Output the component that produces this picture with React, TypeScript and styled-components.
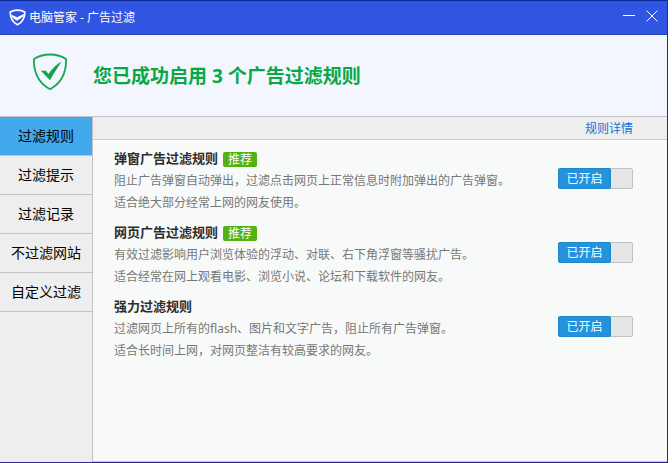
import React, { useState } from "react";
import styled, { createGlobalStyle } from "styled-components";

const GlobalStyle = createGlobalStyle`
  *, *::before, *::after { box-sizing: border-box; }
  body {
    margin: 0;
    background: #fff;
    font-family: "Noto Sans", "Noto Sans CJK SC", sans-serif;
    font-size: 12px;
  }
  button { font-family: inherit; border: 0; padding: 0; background: none; cursor: pointer; }
`;

const Window = styled.div`
  display: flex;
  flex-direction: column;
  min-height: 100vh;
  margin-right: 4px;
  border: 1px solid #36248c;
  border-left: 0;
  border-top-color: #0c2a94;
`;

const TitleBar = styled.header`
  display: flex;
  align-items: center;
  height: 34px;
  padding: 0 8px 0 9px;
  background: #2f55e2;
  border-bottom: 1px solid #2743b4;
  color: #fff;
`;

const WindowTitle = styled.span`
  flex: 1;
  margin-left: 3px;
  line-height: 18px;
`;

const WindowControls = styled.div`
  display: flex;
  gap: 9px;
  padding-bottom: 3px;
`;

const WindowButton = styled.button`
  display: flex;
  width: 14px;
  height: 14px;
  color: #fff;
`;

const Banner = styled.section`
  display: flex;
  align-items: center;
  gap: 25px;
  height: 81px;
  padding: 0 32px;
  background: #f3f6fe;

  svg { margin-bottom: 8px; }
`;

const BannerTitle = styled.h1`
  margin: 0;
  color: #08a845;
  font-size: 19px;
  line-height: 28px;
`;

const Body = styled.div`
  display: flex;
  flex: 1;
  border-top: 1px solid #c3c5c9;
`;

const Sidebar = styled.nav`
  width: 93px;
  flex-shrink: 0;
  background: #eee;
  border-right: 1px solid #bfc0c1;
`;

const NavItem = styled.button<{ $active: boolean }>`
  display: block;
  width: 100%;
  height: 39px;
  border-bottom: 1px solid #c2c2c2;
  background: ${({ $active }) => ($active ? "#41a9ec" : "#eee")};
  color: #000;
  font-size: 14px;
  line-height: 38px;
`;

const Content = styled.main`
  flex: 1;
  background: #f8fafa;
  border-bottom: 1px solid #c4c4cc;
`;

const Toolbar = styled.div`
  display: flex;
  justify-content: flex-end;
  height: 23px;
  padding-right: 34px;
  background: #eee;
  border-bottom: 1px solid #cfd0d0;
`;

const DetailLink = styled.a`
  color: #1272e2;
  line-height: 24px;
  text-decoration: none;
`;

const RuleList = styled.div`
  display: flex;
  flex-direction: column;
  gap: 6px;
  padding: 6px 34px 6px 21px;
`;

const Rule = styled.section`
  display: flex;
  justify-content: space-between;
`;

const RuleHeading = styled.div`
  display: flex;
  align-items: center;
  gap: 5px;
  height: 24px;
`;

const RuleTitle = styled.h2`
  margin: 0;
  color: #2d2d2d;
  font-size: 13px;
  line-height: 24px;
`;

const Badge = styled.span`
  height: 15px;
  margin-top: 2px;
  padding: 0 5px;
  border-radius: 2px;
  background: #52b212;
  color: #fff;
  line-height: 15px;
`;

const Description = styled.p`
  margin: 0;
  color: #777;
  line-height: 22px;
`;

const Toggle = styled.button<{ $on: boolean }>`
  display: flex;
  flex-shrink: 0;
  flex-direction: ${({ $on }) => ($on ? "row" : "row-reverse")};
  width: 75px;
  height: 21px;
  margin-top: 22px;
  border: 1px solid #bfc1c3;
  border-radius: 2px;
  background: #e6e6e6;
`;

const ToggleLabel = styled.span<{ $on: boolean }>`
  width: 53px;
  height: 21px;
  margin: -1px;
  border: 1px solid ${({ $on }) => ($on ? "#1f88cc" : "#999")};
  border-radius: 2px;
  background: ${({ $on }) => ($on ? "#2592dd" : "#aaa")};
  color: #fff;
  font-size: 12px;
  line-height: 20px;
`;

const navItems = ["过滤规则", "过滤提示", "过滤记录", "不过滤网站", "自定义过滤"];

const rules = [
  {
    title: "弹窗广告过滤规则",
    recommended: true,
    lines: ["阻止广告弹窗自动弹出，过滤点击网页上正常信息时附加弹出的广告弹窗。", "适合绝大部分经常上网的网友使用。"],
  },
  {
    title: "网页广告过滤规则",
    recommended: true,
    lines: ["有效过滤影响用户浏览体验的浮动、对联、右下角浮窗等骚扰广告。", "适合经常在网上观看电影、浏览小说、论坛和下载软件的网友。"],
  },
  {
    title: "强力过滤规则",
    recommended: false,
    lines: ["过滤网页上所有的flash、图片和文字广告，阻止所有广告弹窗。", "适合长时间上网，对网页整洁有较高要求的网友。"],
  },
];

function SmallShield() {
  return (
    <svg width="17" height="17" viewBox="0 0 17 17" fill="none" aria-hidden="true">
      <path d="M8.5 1.2C11.5 1.2 14 2 15.8 3.1C16 9 13.5 13 8.5 15.8C3.5 13 1 9 1.2 3.1C3 2 5.5 1.2 8.5 1.2Z" stroke="#fff" strokeWidth="1.7" />
      <path d="M2 5.5L8 8.3L15.5 4.8L14.500 7.500L8 11.800L3 8.500Z" fill="#fff" />
    </svg>
  );
}

function LargeShield() {
  return (
    <svg width="36" height="38" viewBox="0 0 36 38" fill="none" aria-hidden="true">
      <path d="M18 1.5C24.5 1.5 30 3.2 34.2 6.3C34.2 20 30 30 18 36.2C6 30 1.8 20 1.8 6.3C6 3.2 11.5 1.5 18 1.5Z" stroke="#17a854" strokeWidth="1.8" strokeLinejoin="round" />
      <path d="M8.8 17.800H13.800L16.600 21C20 15.800 24 11.800 29.500 8.500C26 14 22 20 18 27.300Z" fill="#12a34d" />
    </svg>
  );
}

function RuleSwitch({ label }: { label: string }) {
  const [on, setOn] = useState(true);
  return (
    <Toggle type="button" role="switch" aria-checked={on} aria-label={label} $on={on} onClick={() => setOn(!on)}>
      <ToggleLabel $on={on}>{on ? "已开启" : "已关闭"}</ToggleLabel>
    </Toggle>
  );
}

export default function App() {
  const [active, setActive] = useState(0);
  return (
    <>
      <GlobalStyle />
      <Window>
        <TitleBar>
          <SmallShield />
          <WindowTitle>电脑管家 - 广告过滤</WindowTitle>
          <WindowControls>
            <WindowButton type="button" aria-label="最小化">
              <svg width="14" height="14" viewBox="0 0 14 14" stroke="currentColor"><path d="M1 6.5H13" /></svg>
            </WindowButton>
            <WindowButton type="button" aria-label="关闭">
              <svg width="14" height="14" viewBox="0 0 14 14" stroke="currentColor"><path d="M1.5 1.5L12.5 12.5M12.5 1.5L1.5 12.5" /></svg>
            </WindowButton>
          </WindowControls>
        </TitleBar>
        <Banner>
          <LargeShield />
          <BannerTitle>您已成功启用 3 个广告过滤规则</BannerTitle>
        </Banner>
        <Body>
          <Sidebar>
            {navItems.map((item, i) => (
              <NavItem key={item} type="button" $active={i === active} onClick={() => setActive(i)}>{item}</NavItem>
            ))}
          </Sidebar>
          <Content>
            <Toolbar><DetailLink href="#details">规则详情</DetailLink></Toolbar>
            <RuleList>
              {rules.map((rule) => (
                <Rule key={rule.title}>
                  <div>
                    <RuleHeading>
                      <RuleTitle>{rule.title}</RuleTitle>
                      {rule.recommended && <Badge>推荐</Badge>}
                    </RuleHeading>
                    {rule.lines.map((line) => <Description key={line}>{line}</Description>)}
                  </div>
                  <RuleSwitch label={rule.title} />
                </Rule>
              ))}
            </RuleList>
          </Content>
        </Body>
      </Window>
    </>
  );
}
